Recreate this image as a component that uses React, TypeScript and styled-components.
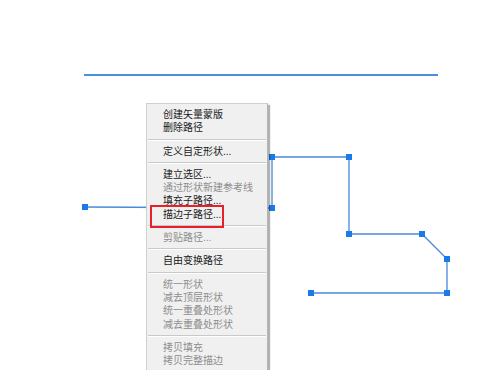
import React from "react";
import styled, { createGlobalStyle } from "styled-components";

const GlobalStyle = createGlobalStyle`
  html, body {
    margin: 0;
    padding: 0;
    background: #ffffff;
  }
  body {
    font-family: "Liberation Sans", "Noto Sans CJK SC", sans-serif;
  }
`;

const Canvas = styled.div`
  position: relative;
  width: 500px;
  height: 370px;
  overflow: hidden;
  background: #ffffff;
`;

const Drawing = styled.svg`
  position: absolute;
  left: 0;
  top: 0;
`;

const Menu = styled.div`
  position: absolute;
  left: 146px;
  top: 103px;
  width: 122px;
  height: 290px;
  padding-top: 4px;
  box-sizing: border-box;
  background: #f0f0f0;
  border: 1px solid #cfcfcf;
  border-right-color: #b4b4b4;
  box-shadow: 2px 2px 1px rgba(0, 0, 0, 0.3);
  display: flex;
  flex-direction: column;
`;

const Item = styled.div<{ $disabled?: boolean }>`
  position: relative;
  padding-left: 16px;
  height: 13.3px;
  line-height: 13.3px;
  font-family: "Liberation Sans", "Noto Sans CJK SC", sans-serif;
  font-size: 10px;
  white-space: nowrap;
  color: ${(p) => (p.$disabled ? "#8d8d8d" : "#1a1a1a")};
`;

const Separator = styled.div`
  margin: 4px 1px 4px 1px;
  height: 0;
  border-top: 1px solid #c9c9c9;
  border-bottom: 1px solid #ffffff;
`;

const Highlight = styled.div`
  position: absolute;
  left: 3px;
  top: -3px;
  width: 70px;
  height: 19px;
  border: 2px solid #e8202a;
`;

const anchors: [number, number][] = [
  [85, 207],
  [272, 208],
  [272, 157],
  [349, 157],
  [349, 234],
  [422, 234],
  [447, 259],
  [447, 293],
  [311, 293],
];

type Entry = { label: string; disabled?: boolean; marked?: boolean } | "sep";

const entries: Entry[] = [
  { label: "创建矢量蒙版" },
  { label: "删除路径" },
  "sep",
  { label: "定义自定形状..." },
  "sep",
  { label: "建立选区..." },
  { label: "通过形状新建参考线", disabled: true },
  { label: "填充子路径..." },
  { label: "描边子路径...", marked: true },
  "sep",
  { label: "剪贴路径...", disabled: true },
  "sep",
  { label: "自由变换路径" },
  "sep",
  { label: "统一形状", disabled: true },
  { label: "减去顶层形状", disabled: true },
  { label: "统一重叠处形状", disabled: true },
  { label: "减去重叠处形状", disabled: true },
  "sep",
  { label: "拷贝填充", disabled: true },
  { label: "拷贝完整描边", disabled: true },
];

export default function App() {
  const points = anchors.map(([x, y]) => `${x},${y}`).join(" ");
  return (
    <Canvas>
      <GlobalStyle />
      <Drawing width={500} height={370}>
        <line x1={84} y1={75} x2={438} y2={75} stroke="#4a8fdc" strokeWidth={2} />
        <polyline points={points} fill="none" stroke="#4a8ad6" strokeWidth={1.3} />
        {anchors.map(([x, y], i) => (
          <rect key={i} x={x - 3} y={y - 3} width={6} height={6} fill="#1a7ae8" />
        ))}
      </Drawing>
      <Menu>
        {entries.map((e, i) =>
          e === "sep" ? (
            <Separator key={i} />
          ) : (
            <Item key={i} $disabled={e.disabled}>
              {e.label}
              {e.marked && <Highlight />}
            </Item>
          )
        )}
      </Menu>
    </Canvas>
  );
}
